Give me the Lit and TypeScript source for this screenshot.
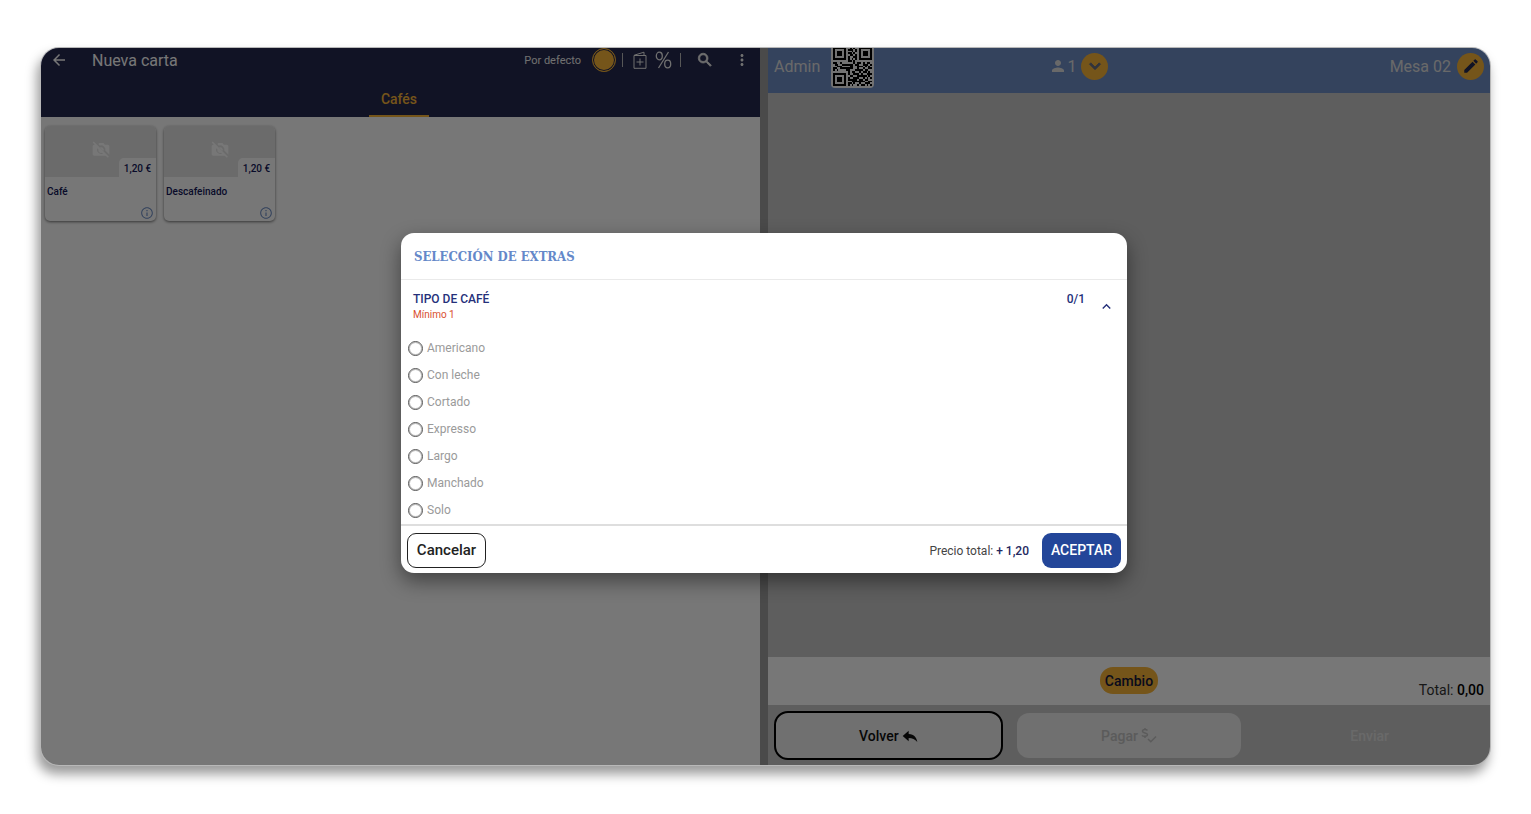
import { LitElement, html, css, svg } from "lit";
import { customElement } from "lit/decorators.js";

const QR_ROWS = [
  "111111100101001111111",
  "100000101110101000001",
  "101110100010101011101",
  "101110101101001011101",
  "101110100110101011101",
  "100000101001101000001",
  "111111101010101111111",
  "000000001101000000000",
  "110010000001011010110",
  "011001111110110011101",
  "001110000110011101010",
  "110011111110010010011",
  "101000011000111101100",
  "000000001011001011010",
  "111111101001110100111",
  "100000100110011111010",
  "101110101001110010101",
  "101110101111101101100",
  "101110100011111110011",
  "100000101101001001110",
  "111111101010010110101",
];

const EXTRAS = ["Americano", "Con leche", "Cortado", "Expresso", "Largo", "Manchado", "Solo"];

const PRODUCTS = [
  { name: "Café", price: "1,20 €" },
  { name: "Descafeinado", price: "1,20 €" },
];

const icon = (size: number, path: string, weight = 0) => html`
  <svg
    width=${size}
    height=${size}
    viewBox="0 0 24 24"
    fill="currentColor"
    stroke="currentColor"
    stroke-width=${weight}
    aria-hidden="true"
  >
    <path d=${path}></path>
  </svg>
`;

const ARROW_BACK = "M20 11H7.83l5.59-5.59L12 4l-8 8 8 8 1.41-1.41L7.83 13H20v-2z";
const SEARCH =
  "M15.5 14h-.79l-.28-.27A6.47 6.47 0 0 0 16 9.5 6.5 6.5 0 1 0 9.5 16c1.61 0 3.09-.59 4.23-1.57l.27.28v.79l5 4.99L20.49 19l-4.99-5zm-6 0C7.01 14 5 11.99 5 9.5S7.01 5 9.5 5 14 7.01 14 9.5 11.99 14 9.5 14z";
const MORE =
  "M12 8c1.1 0 2-.9 2-2s-.9-2-2-2-2 .9-2 2 .9 2 2 2zm0 2c-1.1 0-2 .9-2 2s.9 2 2 2 2-.9 2-2-.9-2-2-2zm0 6c-1.1 0-2 .9-2 2s.9 2 2 2 2-.9 2-2-.9-2-2-2z";
const PERSON =
  "M12 12c2.21 0 4-1.79 4-4s-1.79-4-4-4-4 1.79-4 4 1.79 4 4 4zm0 2c-2.67 0-8 1.34-8 4v2h16v-2c0-2.66-5.33-4-8-4z";
const CHEVRON_DOWN = "M7.41 8.59 12 13.17l4.59-4.58L18 10l-6 6-6-6 1.41-1.41z";
const CHEVRON_UP = "M7.41 15.41 12 10.83l4.59 4.58L18 14l-6-6-6 6 1.41 1.41z";
const PENCIL =
  "M3 17.25V21h3.75L17.81 9.94l-3.75-3.75L3 17.25zM20.71 7.04a1 1 0 0 0 0-1.41l-2.34-2.34a1 1 0 0 0-1.41 0l-1.83 1.83 3.75 3.75 1.83-1.83z";
const INFO =
  "M11 7h2v2h-2zm0 4h2v6h-2zm1-9C6.48 2 2 6.48 2 12s4.48 10 10 10 10-4.48 10-10S17.52 2 12 2zm0 18.2c-4.5 0-8.2-3.7-8.2-8.2S7.5 3.8 12 3.8s8.2 3.7 8.2 8.2-3.7 8.2-8.2 8.2z";
const REPLY = "M10 9V4L1 12l9 8v-5.1c5.5 0 9.5 1.6 13 6.1-1-6.5-4.5-11.5-13-12z";

const noPhoto = html`
  <svg width="20" height="20" viewBox="0 0 24 24" aria-hidden="true">
    <path
      fill="currentColor"
      d="M8.9 6.1 10.1 4.8h4.8L16.7 6.8H20c1.1 0 2 .9 2 2v9.7L17.2 13.9A5.2 5.2 0 0 0 10.6 7.7zM3.3 3 2 4.3 4.5 6.8H4c-1.1 0-2 .9-2 2V18c0 1.1.9 2 2 2h13.7l2.5 2.5 1.3-1.3zM12 17.9a4.9 4.9 0 0 1-4.5-6.8l1.5 1.5a3.2 3.2 0 0 0 4 4l1.5 1.5c-.8-.1-1.6-.2-2.5-.2z"
    ></path>
    <path fill="currentColor" d="M10.7 10.2a3.2 3.2 0 0 1 4.3 4.3z"></path>
  </svg>
`;

const addCard = html`
  <svg width="14" height="18" viewBox="0 0 14 18" fill="none" stroke="currentColor" aria-hidden="true">
    <path d="M1 4.5H13V17.3H1z M1.2 4.2 11 1.2V4.3 M7 7.5V14.5 M3.5 11H10.5"></path>
  </svg>
`;

const percent = html`
  <svg width="17" height="18" viewBox="0 0 17 18" fill="none" stroke="currentColor" stroke-width="1.3" aria-hidden="true">
    <ellipse cx="4.3" cy="5" rx="3" ry="3.8"></ellipse>
    <ellipse cx="12.7" cy="13" rx="3" ry="3.8"></ellipse>
    <path d="M13.5 1 3.5 17"></path>
  </svg>
`;

const payCheck = html`
  <svg width="16" height="17" viewBox="0 0 16 17" fill="none" stroke="currentColor" stroke-width="1.5" aria-hidden="true">
    <path d="M6.5 3.5C5.5 2.3 1.5 2 1.5 4.2S6.5 5.4 6.5 7.6 2 9.8 1 8.3 M4 1V2.5 M4 9.5V11 M7 12 9.8 14.8 15 9.5"></path>
  </svg>
`;

const qrCode = html`
  <svg class="qr" viewBox="-1 -1 23 23" role="img" aria-label="QR">
    <rect x="-1" y="-1" width="23" height="23" fill="#f4f4f4"></rect>
    <g shape-rendering="crispEdges">
      ${QR_ROWS.map((row, y) =>
        [...row].map((cell, x) => (cell === "1" ? svg`<rect x=${x} y=${y} width="1" height="1"></rect>` : null))
      )}
    </g>
  </svg>
`;

const shared = css`
  *,
  *::before {
    box-sizing: border-box;
  }
  button {
    display: flex;
    align-items: center;
    justify-content: center;
    padding: 0;
    border: 0;
    background: none;
    color: inherit;
    font: inherit;
    cursor: pointer;
  }
  svg {
    display: block;
    flex: none;
  }
  h1,
  h2,
  h3,
  p {
    margin: 0;
    font: inherit;
  }
`;

@customElement("menu-panel")
class MenuPanel extends LitElement {
  static styles = [
    shared,
    css`
      :host {
        display: block;
        min-width: 0;
        background: #fff;
      }
      .bar {
        display: flex;
        flex-direction: column;
        justify-content: space-between;
        height: 69px;
        background: #25294f;
        color: #fff;
      }
      .top {
        display: flex;
        align-items: center;
        height: 24px;
        padding: 0 9px;
      }
      .title {
        flex: 1;
        padding-left: 24px;
        font-size: 16px;
        color: #fff;
      }
      .tools {
        display: flex;
        align-items: center;
        color: #f0f0f0;
        font-size: 11px;
      }
      .dot {
        width: 24px;
        height: 24px;
        margin: 0 6px 0 11px;
        border: 1px solid #fab638;
        border-radius: 50%;
        background: #fab638;
        box-shadow: inset 0 0 0 1px #25294f;
      }
      .rule {
        width: 1px;
        height: 14px;
        background: #bbb;
      }
      .add {
        margin: 0 8px 0 10px;
      }
      .pct {
        margin-right: 8px;
      }
      .search {
        margin: 0 19px 0 15px;
      }
      .tabs {
        display: flex;
        justify-content: center;
        padding-right: 3px;
      }
      .tab {
        padding: 2px 12px 0;
        height: 37px;
        border-bottom: 2px solid #fab638;
        color: #fab638;
        font-size: 14px;
        font-weight: 500;
      }
      .grid {
        display: flex;
        flex-wrap: wrap;
        gap: 8px;
        padding: 9px 4px;
      }
      .card {
        width: 111px;
        border-radius: 5px;
        overflow: hidden;
        background: #fff;
        box-shadow: 0 1px 3px rgba(0, 0, 0, 0.55);
        color: #14185a;
        font-weight: 500;
      }
      .photo {
        display: grid;
        grid-template-columns: 1fr auto 1fr;
        height: 51px;
        background: #e6e6e6;
        color: #fff;
      }
      .photo svg {
        grid-column: 2;
        margin-top: 13px;
      }
      .price {
        align-self: end;
        justify-self: end;
        width: 37px;
        height: 19px;
        border-radius: 5px 0 0 0;
        background: #fff;
        color: #14185a;
        font-size: 10px;
        line-height: 21px;
        text-align: center;
      }
      .body {
        display: flex;
        flex-direction: column;
        justify-content: space-between;
        height: 44px;
        padding: 9px 2px 1px;
        font-size: 10px;
        line-height: 12px;
      }
      .info {
        align-self: flex-end;
        color: #6f8fc7;
      }
    `,
  ];

  render() {
    return html`
      <header class="bar">
        <div class="top">
          <button aria-label="Atrás">${icon(18, ARROW_BACK)}</button>
          <h1 class="title">Nueva carta</h1>
          <div class="tools">
            <span>Por defecto</span>
            <button class="dot" aria-label="Color"></button>
            <span class="rule"></span>
            <button class="add" aria-label="Añadir">${addCard}</button>
            <button class="pct" aria-label="Descuento">${percent}</button>
            <span class="rule"></span>
            <button class="search" aria-label="Buscar">${icon(18, SEARCH, 1)}</button>
            <button aria-label="Más">${icon(18, MORE)}</button>
          </div>
        </div>
        <nav class="tabs"><button class="tab">Cafés</button></nav>
      </header>
      <div class="grid">
        ${PRODUCTS.map(
          (p) => html`
            <article class="card">
              <div class="photo">${noPhoto}<span class="price">${p.price}</span></div>
              <div class="body">
                <span>${p.name}</span>
                <button class="info" aria-label="Información">${icon(14, INFO)}</button>
              </div>
            </article>
          `
        )}
      </div>
    `;
  }
}

@customElement("order-panel")
class OrderPanel extends LitElement {
  static styles = [
    shared,
    css`
      :host {
        display: flex;
        flex-direction: column;
        min-width: 0;
        background: #c9c9c9;
      }
      .bar {
        display: grid;
        grid-template-columns: 11fr auto 15fr;
        align-items: center;
        height: 45px;
        padding: 0 6px 9px;
        background: #6f8fc7;
        color: #e2e2e2;
        font-size: 16px;
      }
      .side {
        display: flex;
        align-items: center;
      }
      .end {
        justify-content: flex-end;
      }
      .qr {
        width: 43px;
        height: 43px;
        margin: -4px 0 -4px 11px;
        border-radius: 4px;
      }
      .count {
        margin: 0 5px 0 0;
      }
      .round {
        width: 27px;
        height: 27px;
        border-radius: 50%;
        background: #fab638;
        color: #25294f;
      }
      .chev {
        color: #6a6f80;
      }
      .end .round {
        margin-left: 6px;
      }
      .lines {
        flex: 1;
      }
      .totals {
        display: grid;
        grid-template-columns: 1fr auto 1fr;
        height: 48px;
        padding: 10px 6px 7px;
        background: #fff;
        color: #333;
        font-size: 14px;
      }
      .change {
        grid-column: 2;
        height: 27px;
        padding: 0 5px;
        border-radius: 13px;
        background: #fab638;
        color: #14163c;
        font-weight: 500;
      }
      .sum {
        align-self: end;
        justify-self: end;
        line-height: 16px;
      }
      .sum strong {
        color: #000;
        font-weight: 500;
      }
      .actions {
        display: grid;
        grid-template-columns: repeat(3, 1fr);
        height: 60px;
        font-size: 14px;
        font-weight: 500;
      }
      .act {
        gap: 3px;
        margin: 8px 8px 7px;
        border-radius: 12px;
      }
      .back {
        margin: 6px 6px 5px;
        border: 2px solid #000;
        border-radius: 14px;
        background: #efefef;
        color: #111;
      }
      .pay {
        background: #efefef;
        color: #c4c4c4;
      }
      .send {
        color: #e2e2e2;
      }
    `,
  ];

  render() {
    return html`
      <header class="bar">
        <div class="side"><span>Admin</span>${qrCode}</div>
        <div class="side">
          ${icon(18, PERSON)}<span class="count">1</span>
          <button class="round chev" aria-label="Comensales">${icon(22, CHEVRON_DOWN, 1)}</button>
        </div>
        <div class="side end">
          <span>Mesa 02</span>
          <button class="round" aria-label="Editar mesa">${icon(18, PENCIL)}</button>
        </div>
      </header>
      <div class="lines"></div>
      <div class="totals">
        <button class="change">Cambio</button>
        <p class="sum">Total: <strong>0,00</strong></p>
      </div>
      <div class="actions">
        <button class="act back">Volver ${icon(16, REPLY)}</button>
        <button class="act pay">Pagar ${payCheck}</button>
        <button class="act send">Enviar</button>
      </div>
    `;
  }
}

@customElement("extras-dialog")
class ExtrasDialog extends LitElement {
  static styles = [
    shared,
    css`
      :host {
        display: block;
        width: 90%;
        max-width: 726px;
      }
      .dialog {
        border-radius: 13px;
        background: #fff;
        box-shadow: 0 8px 20px rgba(0, 0, 0, 0.45);
        color: #25307a;
      }
      .head {
        height: 47px;
        padding: 0 13px;
        border-bottom: 1px solid #eaeaea;
        color: #6488c9;
        font-family: "Roboto Slab", "DejaVu Serif Condensed", "DejaVu Serif", serif;
        font-size: 13px;
        font-weight: 700;
        line-height: 47px;
      }
      .group {
        display: flex;
        align-items: flex-start;
        padding: 11px 12px 0;
        font-size: 12px;
        font-weight: 500;
        line-height: 16px;
      }
      .name {
        flex: 1;
      }
      .min {
        color: #d9502f;
        font-size: 10px;
        font-weight: 400;
      }
      .fold {
        margin: 7px 0 0 13px;
      }
      .options {
        margin: 0;
        padding: 12px 7px 0;
        border: 0;
      }
      .option {
        display: flex;
        align-items: center;
        gap: 4px;
        height: 27px;
        color: #9a9a9a;
        font-size: 12px;
      }
      .option input {
        appearance: none;
        width: 15px;
        height: 15px;
        margin: 0;
        border: 1px solid #555;
        border-radius: 50%;
        background: #fff;
        box-shadow: inset 0 0 0 1px #bbb;
      }
      .option input:checked {
        background: #234699;
      }
      .foot {
        display: flex;
        align-items: center;
        height: 49px;
        padding: 2px 6px 0;
        border-top: 2px solid #dedede;
      }
      .btn {
        height: 35px;
        width: 79px;
        border-radius: 9px;
        font-size: 14px;
        font-weight: 500;
      }
      .cancel {
        border: 1px solid #222;
        color: #222;
        font-size: 15px;
      }
      .ok {
        background: #234699;
        color: #fff;
      }
      .sum {
        flex: 1;
        padding: 2px 13px 0 0;
        color: #444;
        font-size: 12px;
        text-align: right;
      }
      .sum strong {
        color: #25295f;
        font-weight: 500;
      }
    `,
  ];

  render() {
    return html`
      <section class="dialog" role="dialog" aria-labelledby="title">
        <h2 class="head" id="title">SELECCIÓN DE EXTRAS</h2>
        <div class="group">
          <div class="name">
            <h3>TIPO DE CAFÉ</h3>
            <p class="min">Mínimo 1</p>
          </div>
          <span>0/1</span>
          <button class="fold" aria-label="Plegar">${icon(17, CHEVRON_UP)}</button>
        </div>
        <fieldset class="options" aria-label="TIPO DE CAFÉ">
          ${EXTRAS.map(
            (name) => html`<label class="option"><input type="radio" name="tipo" value=${name} />${name}</label>`
          )}
        </fieldset>
        <footer class="foot">
          <button class="btn cancel">Cancelar</button>
          <p class="sum">Precio total: <strong>+ 1,20</strong></p>
          <button class="btn ok">ACEPTAR</button>
        </footer>
      </section>
    `;
  }
}

@customElement("app-root")
class AppRoot extends LitElement {
  static styles = [
    shared,
    css`
      :host {
        display: block;
        box-sizing: border-box;
        height: 100vh;
        min-height: 560px;
        padding: 48px 41px 49px;
        background: #fff;
        font-family: Roboto, sans-serif;
      }
      .screen {
        position: relative;
        height: 100%;
        border-radius: 18px;
        box-shadow: 0 0 0 1px #b8b8b8, -3px 8px 12px 1px rgba(0, 0, 0, 0.4);
      }
      .panels {
        display: grid;
        grid-template-columns: 719fr 8px 722fr;
        height: 100%;
        border-radius: 18px;
        overflow: hidden;
      }
      .split {
        background: #9e9e9e;
      }
      .scrim {
        position: absolute;
        inset: 0;
        display: flex;
        align-items: center;
        justify-content: center;
        padding: 0 3px 8px 0;
        border-radius: 18px;
        background: rgba(0, 0, 0, 0.535);
      }
    `,
  ];

  render() {
    return html`
      <main class="screen">
        <div class="panels">
          <menu-panel></menu-panel>
          <div class="split"></div>
          <order-panel></order-panel>
        </div>
        <div class="scrim"><extras-dialog></extras-dialog></div>
      </main>
    `;
  }
}
